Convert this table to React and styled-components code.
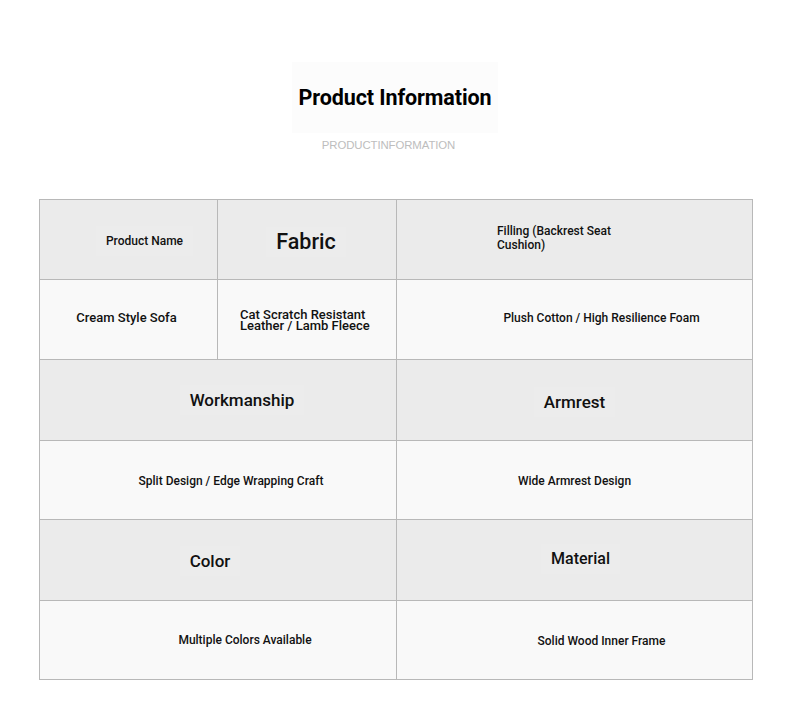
import styled, { createGlobalStyle } from "styled-components";

const GlobalStyle = createGlobalStyle`
  body {
    margin: 0;
    background: #ffffff;
    font-family: Roboto, "Liberation Sans", Arial, sans-serif;
    color: #111111;
  }
`;

// each row: cells with text, kind (head / value), span, shift (dx, dy) and optional size
const rows = [
  {
    height: 79,
    cells: [
      { text: 'Product Name', kind: 'head', size: 12, dx: 16, dy: 1 },
      { text: 'Fabric', kind: 'head', size: 21.5, dx: -1, dy: 2 },
      { text: 'Filling (Backrest Seat Cushion)', kind: 'head', size: 12, left: 100, width: 130, dy: -2 },
    ],
  },
  {
    height: 79,
    cells: [
      { text: 'Cream Style Sofa', kind: 'value', size: 13, dx: -2, dy: -2 },
      { text: 'Cat Scratch Resistant Leather / Lamb Fleece', kind: 'value', size: 13, left: 22, width: 140, tight: true },
      { text: 'Plush Cotton / High Resilience Foam', kind: 'value', size: 12, dx: 27, dy: -2 },
    ],
  },
  {
    height: 80,
    cells: [
      { text: 'Workmanship', kind: 'head', size: 17, dx: 24, dy: -0.5, span: 2 },
      { text: 'Armrest', kind: 'head', size: 17, dx: 0, dy: 1.5 },
    ],
  },
  {
    height: 78,
    cells: [
      { text: 'Split Design / Edge Wrapping Craft', kind: 'value', size: 12, dx: 13, dy: 1, span: 2 },
      { text: 'Wide Armrest Design', kind: 'value', size: 12, dx: 0, dy: 1 },
    ],
  },
  {
    height: 80,
    cells: [
      { text: 'Color', kind: 'head', size: 17, dx: -8, dy: 0.5, span: 2 },
      { text: 'Material', kind: 'head', size: 16, dx: 6, dy: -1 },
    ],
  },
  {
    height: 78,
    cells: [
      { text: 'Multiple Colors Available', kind: 'value', size: 12, dx: 27, dy: 0, span: 2 },
      { text: 'Solid Wood Inner Frame', kind: 'value', size: 12, dx: 27, dy: 1 },
    ],
  },
];

function App() {
  return (
    <Page>
      <GlobalStyle />
      <TitleBox>
        <Title>Product Information</Title>
      </TitleBox>
      <Subtitle>PRODUCTINFORMATION</Subtitle>
      <Table $rows={rows.map(r => r.height)}>
        {rows.map((row, ri) =>
          row.cells.map((cell, ci) => (
            <Cell
              key={`${ri}-${ci}`}
              $kind={cell.kind}
              $span={cell.span || 1}
              $dx={cell.dx || 0}
              $dy={cell.dy || 0}
              $left={cell.left}
            >
              <Label
                $size={cell.size}
                $head={cell.kind === 'head'}
                $width={cell.width}
                $tight={cell.tight}
              >
                {cell.text}
              </Label>
            </Cell>
          ))
        )}
      </Table>
    </Page>
  );
}

const Page = styled.div`
  display: flex;
  flex-direction: column;
  align-items: center;
  padding: 62px 0 31px;
`;

const TitleBox = styled.div`
  width: 206px;
  height: 71px;
  display: flex;
  align-items: center;
  justify-content: center;
  background: #fcfcfc;
`;

const Title = styled.h1`
  margin: 0;
  font-size: 21.5px;
  font-weight: 700;
  color: #000000;
  letter-spacing: -0.1px;
  white-space: nowrap;
`;

const Subtitle = styled.div`
  margin-top: 6px;
  margin-right: 13px;
  font-family: "Liberation Sans", Arial, sans-serif;
  font-size: 11.4px;
  line-height: 13px;
  color: #bdbdbd;
  letter-spacing: -0.1px;
`;

const Table = styled.div`
  margin-top: 47px;
  align-self: flex-start;
  margin-left: 39px;
  display: grid;
  grid-template-columns: 177px 178px 355px;
  grid-template-rows: ${p => p.$rows.map(h => `${h}px`).join(' ')};
  gap: 1px;
  padding: 1px;
  background: #b8b8b8;
`;

const Cell = styled.div`
  grid-column: span ${p => p.$span};
  display: flex;
  align-items: center;
  justify-content: ${p => (p.$left !== undefined ? 'flex-start' : 'center')};
  background: ${p => (p.$kind === 'head' ? '#ebebeb' : '#f9f9f9')};
  padding-left: ${p => (p.$left !== undefined ? p.$left : Math.max(p.$dx, 0) * 2)}px;
  padding-right: ${p => Math.max(-p.$dx, 0) * 2}px;
  padding-top: ${p => Math.max(p.$dy, 0) * 2}px;
  padding-bottom: ${p => Math.max(-p.$dy, 0) * 2}px;
`;

const Label = styled.span`
  font-size: ${p => p.$size}px;
  font-weight: 500;
  line-height: ${p => (p.$tight ? '11px' : '14px')};
  color: #111111;
  letter-spacing: 0;
  max-width: ${p => (p.$width ? `${p.$width}px` : 'none')};
  white-space: ${p => (p.$width ? 'normal' : 'nowrap')};
  padding: ${p => (p.$head && !p.$width ? '8px 10px' : '0')};
  background: ${p => (p.$head && !p.$width ? '#ececec' : 'transparent')};
`;

export default App;
